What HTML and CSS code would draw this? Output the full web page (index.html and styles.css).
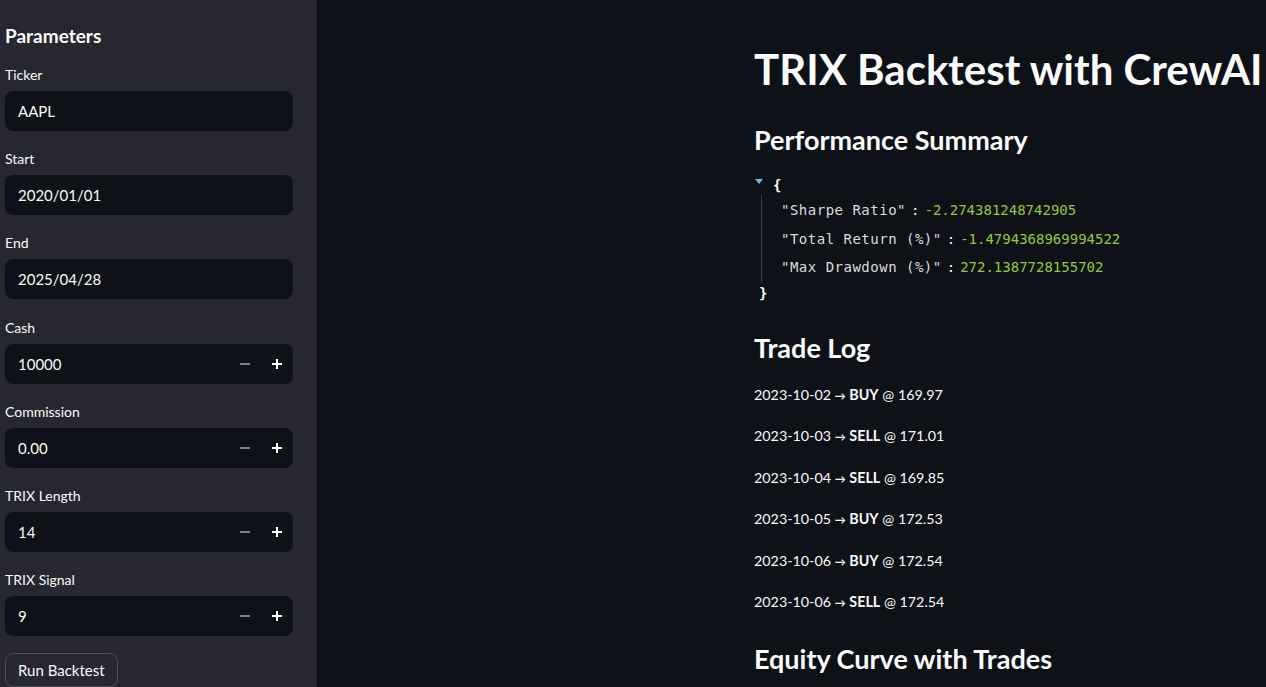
FILE: index.html
```html
<!DOCTYPE html>
<html lang="en">
<head>
<meta charset="utf-8">
<title>TRIX Backtest with CrewAI</title>
<link rel="stylesheet" href="styles.css">
</head>
<body>
<div class="app">
  <aside class="sidebar">
    <h2 class="side-title">Parameters</h2>
    <div class="fields">
      <div class="field">
        <label class="label">Ticker</label>
        <div class="input"><span class="value">AAPL</span></div>
      </div>
      <div class="field">
        <label class="label">Start</label>
        <div class="input"><span class="value">2020/01/01</span></div>
      </div>
      <div class="field">
        <label class="label">End</label>
        <div class="input"><span class="value">2025/04/28</span></div>
      </div>
      <div class="field">
        <label class="label">Cash</label>
        <div class="input">
          <span class="value">10000</span>
          <span class="step minus"><svg width="10" height="10" viewBox="0 0 10 10"><rect x="0" y="4" width="10" height="2" fill="currentColor"/></svg></span>
          <span class="step plus"><svg width="10" height="10" viewBox="0 0 10 10"><rect x="0" y="4" width="10" height="2" fill="currentColor"/><rect x="4" y="0" width="2" height="10" fill="currentColor"/></svg></span>
        </div>
      </div>
      <div class="field">
        <label class="label">Commission</label>
        <div class="input">
          <span class="value">0.00</span>
          <span class="step minus"><svg width="10" height="10" viewBox="0 0 10 10"><rect x="0" y="4" width="10" height="2" fill="currentColor"/></svg></span>
          <span class="step plus"><svg width="10" height="10" viewBox="0 0 10 10"><rect x="0" y="4" width="10" height="2" fill="currentColor"/><rect x="4" y="0" width="2" height="10" fill="currentColor"/></svg></span>
        </div>
      </div>
      <div class="field">
        <label class="label">TRIX Length</label>
        <div class="input">
          <span class="value">14</span>
          <span class="step minus"><svg width="10" height="10" viewBox="0 0 10 10"><rect x="0" y="4" width="10" height="2" fill="currentColor"/></svg></span>
          <span class="step plus"><svg width="10" height="10" viewBox="0 0 10 10"><rect x="0" y="4" width="10" height="2" fill="currentColor"/><rect x="4" y="0" width="2" height="10" fill="currentColor"/></svg></span>
        </div>
      </div>
      <div class="field">
        <label class="label">TRIX Signal</label>
        <div class="input">
          <span class="value">9</span>
          <span class="step minus"><svg width="10" height="10" viewBox="0 0 10 10"><rect x="0" y="4" width="10" height="2" fill="currentColor"/></svg></span>
          <span class="step plus"><svg width="10" height="10" viewBox="0 0 10 10"><rect x="0" y="4" width="10" height="2" fill="currentColor"/><rect x="4" y="0" width="2" height="10" fill="currentColor"/></svg></span>
        </div>
      </div>
    </div>
    <button class="run-btn">Run Backtest</button>
  </aside>
  <main class="main">
    <h1 class="title">TRIX Backtest with CrewAI</h1>
    <h3 class="section">Performance Summary</h3>
    <div class="json">
      <div class="json-open"><span class="caret"></span><span class="brace">{</span></div>
      <div class="json-body">
        <div class="json-row"><span class="key">"Sharpe Ratio"</span><span class="colon">:</span><span class="num">-2.274381248742905</span></div>
        <div class="json-row"><span class="key">"Total Return (%)"</span><span class="colon">:</span><span class="num">-1.4794368969994522</span></div>
        <div class="json-row"><span class="key">"Max Drawdown (%)"</span><span class="colon">:</span><span class="num">272.1387728155702</span></div>
      </div>
      <div class="json-close"><span class="brace">}</span></div>
    </div>
    <h3 class="section trade-h">Trade Log</h3>
    <p class="trade">2023-10-02 <span class="arrow">→</span> <strong>BUY</strong> @ 169.97</p>
    <p class="trade">2023-10-03 <span class="arrow">→</span> <strong>SELL</strong> @ 171.01</p>
    <p class="trade">2023-10-04 <span class="arrow">→</span> <strong>SELL</strong> @ 169.85</p>
    <p class="trade">2023-10-05 <span class="arrow">→</span> <strong>BUY</strong> @ 172.53</p>
    <p class="trade">2023-10-06 <span class="arrow">→</span> <strong>BUY</strong> @ 172.54</p>
    <p class="trade">2023-10-06 <span class="arrow">→</span> <strong>SELL</strong> @ 172.54</p>
    <h3 class="section equity-h">Equity Curve with Trades</h3>
  </main>
</div>
</body>
</html>
```

FILE: styles.css
```css
* { box-sizing: border-box; }

html, body {
  margin: 0;
  padding: 0;
  height: 100%;
  overflow: hidden;
  background: #0e1117;
  color: #fafafa;
  font-family: Lato, "Noto Sans", sans-serif;
}

.app {
  display: flex;
  height: 100%;
}

.sidebar {
  width: 317px;
  flex: 0 0 317px;
  background: #262730;
  border-right: 1px solid #1f2029;
  padding: 24px 0 0 5px;
  display: flex;
  flex-direction: column;
  align-items: flex-start;
}

.side-title {
  margin: 0 0 17px;
  font-size: 19px;
  line-height: 24px;
  font-weight: 700;
}

.fields {
  display: flex;
  flex-direction: column;
  gap: 18.2px;
  width: 288px;
}

.field {
  display: flex;
  flex-direction: column;
}

.label {
  font-size: 14px;
  line-height: 20px;
  margin-bottom: 6px;
  color: #fafafa;
}

.input {
  height: 40px;
  border-radius: 8px;
  background: #0e1117;
  display: flex;
  align-items: center;
  padding-left: 13px;
}

.value {
  flex: 1;
  font-size: 15px;
  color: #fafafa;
}

.step {
  width: 32px;
  height: 40px;
  display: flex;
  align-items: center;
  justify-content: center;
}

.minus { color: #7d7f88; }
.plus { color: #ffffff; }

.run-btn {
  margin-top: 17px;
  background: transparent;
  color: #fafafa;
  border: 1px solid #4b4d58;
  border-radius: 8px;
  font-family: inherit;
  font-size: 15px;
  padding: 0 12px;
  height: 40px;
}

.main {
  flex: 1;
  min-width: 0;
  overflow: hidden;
  padding: 43px 0 0 437px;
  white-space: nowrap;
}

.title {
  margin: 0 0 28px;
  font-size: 42px;
  line-height: 52px;
  font-weight: 700;
}

.section {
  margin: 0;
  font-size: 27px;
  line-height: 34px;
  font-weight: 700;
}

.json {
  margin-top: 18px;
  font-family: "DejaVu Sans Mono", "Liberation Mono", monospace;
  font-size: 14px;
}

.json-open {
  height: 20px;
  line-height: 20px;
  display: flex;
  align-items: center;
}

.caret {
  width: 0;
  height: 0;
  border-left: 4px solid transparent;
  border-right: 4px solid transparent;
  border-top: 5px solid #64c4e0;
  margin: -8px 10px 0 1px;
}

.brace {
  font-weight: 700;
  color: #fafafa;
}

.json-body {
  margin-left: 7px;
  border-left: 1px solid #3b3e48;
  padding: 1px 0 1px 19px;
}

.json-row {
  line-height: 28.5px;
}

.key {
  color: #dcdcdc;
  letter-spacing: 0.5px;
}

.colon {
  margin: 0 5px;
  color: #fafafa;
}

.num {
  color: #96c83c;
}

.json-close {
  height: 20px;
  line-height: 20px;
  padding-left: 5px;
}

.trade-h {
  margin-top: 28px;
  margin-bottom: 17px;
}

.trade {
  margin: 0 0 16px;
  font-size: 14.3px;
  line-height: 25.6px;
  height: 25.6px;
}

.arrow {
  font-size: 11px;
  font-weight: 700;
  line-height: 1;
}

.trade strong { font-weight: 700; }

.equity-h {
  margin-top: 27px;
}
```
